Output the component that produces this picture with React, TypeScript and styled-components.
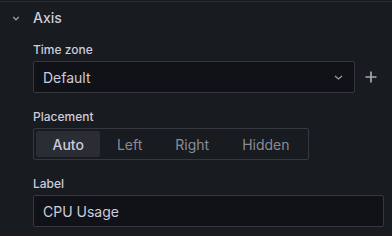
import React from "react";
import styled, { createGlobalStyle } from "styled-components";

const Global = createGlobalStyle`
  html, body { margin: 0; padding: 0; background: #181b1f; }
  body { font-family: Inter, "Noto Sans", sans-serif; color: rgb(204,204,220); }
  * { box-sizing: border-box; }
`;

const Section = styled.div`
  margin-top: 1px;
  border-top: 1px solid #2b2e34;
  width: 392px;
  height: 234px;
  background: #181b1f;
`;

const Header = styled.div`
  display: flex;
  align-items: center;
  height: 20px;
  margin-top: 6px;
  padding-left: 8px;
`;

const IconBox = styled.span`
  display: flex;
  align-items: center;
  justify-content: center;
  width: 16px;
  height: 16px;
  margin-right: 9px;
  color: #9a9ba5;
`;

const Title = styled.div`
  font-size: 14px;
  font-weight: 500;
  line-height: 20px;
  color: rgb(204,204,220);
`;

const Body = styled.div`
  padding: 13px 0 0 33px;
`;

const Field = styled.div`
  margin-bottom: 15px;
`;

const Label = styled.div`
  font-size: 12px;
  font-weight: 500;
  line-height: 18px;
  height: 18px;
  margin-bottom: 2px;
  color: rgb(204,204,220);
`;

const Row = styled.div`
  display: flex;
  align-items: center;
`;

const InputBox = styled.div<{ $width: number }>`
  display: flex;
  flex-shrink: 0;
  align-items: center;
  width: ${(p) => p.$width}px;
  height: 32px;
  padding: 0 9px;
  background: #111217;
  border: 1px solid #36383f;
  border-radius: 2px;
  font-size: 14px;
  color: rgb(204,204,220);
`;

const Value = styled.span`
  flex: 1;
`;

const PlusBtn = styled.span`
  display: flex;
  align-items: center;
  justify-content: center;
  flex-shrink: 0;
  width: 32px;
  height: 32px;
  color: #a8a9b2;
`;

const Group = styled.div`
  display: inline-flex;
  height: 32px;
  padding: 2px;
  border: 1px solid #36383f;
  border-radius: 2px;
`;

const Option = styled.div<{ $active?: boolean }>`
  display: flex;
  align-items: center;
  height: 26px;
  padding: 0 16.5px;
  border-radius: 2px;
  font-size: 14px;
  font-weight: ${(p) => (p.$active ? 500 : 400)};
  color: ${(p) => (p.$active ? "rgb(204,204,220)" : "rgba(204,204,220,0.65)")};
  background: ${(p) => (p.$active ? "#2a2d33" : "transparent")};
`;

export default function App() {
  return (
    <>
      <Global />
      <Section>
        <Header>
          <IconBox>
            <svg width="8" height="5" viewBox="0 0 8 5">
              <polyline points="1.2,1 4,3.8 6.8,1" fill="none" stroke="currentColor" strokeWidth="1.3" />
            </svg>
          </IconBox>
          <Title>Axis</Title>
        </Header>
        <Body>
          <Field>
            <Label>Time zone</Label>
            <Row>
              <InputBox $width={322}>
                <Value>Default</Value>
                <svg width="9" height="5" viewBox="0 0 9 5" style={{ marginRight: 2, color: "#9a9ba5" }}>
                  <polyline points="1,1 4.5,4 8,1" fill="none" stroke="currentColor" strokeWidth="1.3" />
                </svg>
              </InputBox>
              <PlusBtn>
                <svg width="12" height="12" viewBox="0 0 12 12">
                  <path d="M6 0.5v11M0.5 6h11" stroke="currentColor" strokeWidth="1.7" />
                </svg>
              </PlusBtn>
            </Row>
          </Field>
          <Field>
            <Label>Placement</Label>
            <Group>
              <Option $active>Auto</Option>
              <Option>Left</Option>
              <Option>Right</Option>
              <Option>Hidden</Option>
            </Group>
          </Field>
          <Field>
            <Label>Label</Label>
            <InputBox $width={351}>
              <Value>CPU Usage</Value>
            </InputBox>
          </Field>
        </Body>
      </Section>
    </>
  );
}
